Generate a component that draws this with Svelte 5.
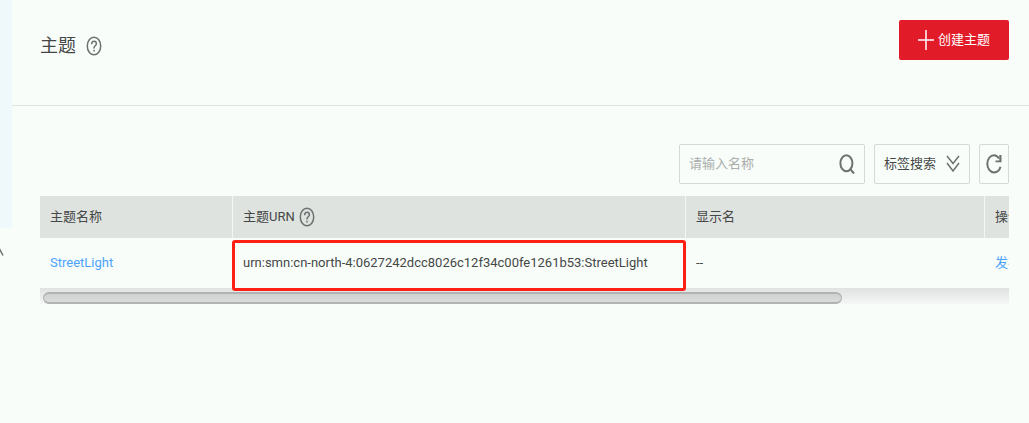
<script>
  let keyword = '';

  const topics = [
    {
      name: 'StreetLight',
      urn: 'urn:smn:cn-north-4:0627242dcc8026c12f34c00fe1261b53:StreetLight',
      display: '--'
    }
  ];
</script>

{#snippet helpIcon()}
  <svg class="help" viewBox="0 0 16 20" aria-hidden="true">
    <ellipse cx="8" cy="10" rx="6.7" ry="8.8" />
    <path d="M5.6 8.2C5.7 6.2 6.6 5.2 8 5.2s2.4 1 2.4 2.6c0 1.9-2.4 2.1-2.4 4.1v.6M8 13.8v1.7" />
  </svg>
{/snippet}

<div class="layout">
  <aside class="sidebar">
    <div class="panel"></div>
    <svg class="caret" viewBox="0 0 4 9" aria-hidden="true"><path d="M-2 7l1.5-6L3 7.5" /></svg>
  </aside>

  <main>
    <header>
      <h1>主题 {@render helpIcon()}</h1>
      <button class="create">
        <svg class="plus" viewBox="0 0 16 20" aria-hidden="true"><path d="M8 0v20M0 10h16" /></svg>
        创建主题
      </button>
    </header>

    <section class="content">
      <div class="toolbar">
        <div class="search">
          <input type="text" placeholder="请输入名称" aria-label="请输入名称" bind:value={keyword} />
          <svg class="magnifier" viewBox="0 0 16 20" aria-hidden="true">
            <ellipse cx="7.4" cy="9.2" rx="6" ry="8" />
            <path d="M11.5 15.5l3.5 4" />
          </svg>
        </div>
        <button class="tags">
          标签搜索
          <svg class="chevrons" viewBox="0 0 14 18" aria-hidden="true">
            <path d="M1 1l6 7.5L13 1M1 8l6 8 6-8" />
          </svg>
        </button>
        <button class="refresh" aria-label="刷新">
          <svg viewBox="0 0 16 20" aria-hidden="true">
            <path d="M13 4.600C11.800 2.600 10 1.300 8 1.300 4.300 1.300 1.300 5 1.300 9.800s3 8.600 6.700 8.600c3 0 5.600-2.300 6.500-5.600" />
            <path class="arrow" d="M15.500 1v7.200H9.500V6.400h3.800V1z" />
          </svg>
        </button>
      </div>

      <div class="scroller">
        <table>
          <colgroup>
            <col class="col-name" />
            <col class="col-urn" />
            <col class="col-display" />
            <col class="col-action" />
          </colgroup>
          <thead>
            <tr>
              <th>主题名称</th>
              <th><span class="with-icon">主题URN {@render helpIcon()}</span></th>
              <th>显示名</th>
              <th>操作</th>
            </tr>
          </thead>
          <tbody>
            {#each topics as topic}
              <tr>
                <td><a href="#topic">{topic.name}</a></td>
                <td class="marked">{topic.urn}</td>
                <td>{topic.display}</td>
                <td><a href="#publish">发布消息</a></td>
              </tr>
            {/each}
          </tbody>
        </table>
        <div class="track"><div class="thumb"></div></div>
      </div>
    </section>
  </main>
</div>

<style>
  :global(body) {
    margin: 0;
    background: #f8fdfa;
  }

  .layout {
    display: flex;
    color: #454746;
    font-family: Roboto, "Noto Sans CJK SC", sans-serif;
    font-size: 13px;
    line-height: 22px;
  }

  svg {
    display: block;
    flex: none;
    fill: none;
    stroke: #6e7170;
    stroke-width: 1.5;
  }

  button,
  input {
    box-sizing: border-box;
    font: inherit;
    color: inherit;
  }

  button {
    display: flex;
    align-items: center;
    cursor: pointer;
  }

  .sidebar {
    flex: none;
    width: 12px;
  }

  .panel {
    height: 228px;
    background: #eff8fa;
  }

  .caret {
    width: 4px;
    height: 9px;
    margin-top: 20px;
  }

  main {
    flex: 1;
    min-width: 0;
  }

  header {
    display: flex;
    align-items: flex-start;
    justify-content: space-between;
    box-sizing: border-box;
    height: 106px;
    padding: 20px 20px 0 28px;
    border-bottom: 1px solid #dfe3e1;
  }

  h1 {
    display: flex;
    align-items: center;
    gap: 10px;
    margin: 0;
    height: 52px;
    font-size: 18px;
    font-weight: 400;
  }

  .help {
    width: 16px;
    height: 20px;
  }

  .create {
    gap: 4px;
    height: 40px;
    padding: 0 19px;
    border: 0;
    border-radius: 2px;
    background: #e21b29;
    color: #fff;
  }

  .plus {
    width: 16px;
    height: 20px;
    stroke: #fff;
  }

  .content {
    padding: 38px 20px 0 28px;
  }

  .toolbar {
    display: flex;
    justify-content: flex-end;
    gap: 9px;
    margin-bottom: 12px;
  }

  .search,
  .tags,
  .refresh {
    box-sizing: border-box;
    height: 40px;
    border: 1px solid #d5d9d7;
    border-radius: 2px;
    background: #f8fdfa;
  }

  .search {
    display: flex;
    align-items: center;
    width: 186px;
    padding: 0 9px;
  }

  .search input {
    flex: 1;
    min-width: 0;
    padding: 0;
    border: 0;
    outline: 0;
    background: transparent;
  }

  .search input::placeholder {
    color: #aaadab;
    opacity: 1;
  }

  .magnifier {
    width: 16px;
    height: 20px;
    stroke-width: 2;
  }

  .tags {
    gap: 10px;
    padding: 0 9px;
  }

  .chevrons {
    width: 14px;
    height: 18px;
  }

  .refresh {
    justify-content: center;
    width: 30px;
    padding: 0;
  }

  .refresh svg {
    width: 16px;
    height: 20px;
    stroke-width: 2;
  }

  .refresh .arrow {
    fill: #6e7170;
    stroke: none;
  }

  .scroller {
    overflow: hidden;
  }

  table {
    width: 1170px;
    table-layout: fixed;
    border-collapse: separate;
    border-spacing: 0;
  }

  .col-name {
    width: 193px;
  }

  .col-urn {
    width: 453px;
  }

  .col-display {
    width: 299px;
  }

  th,
  td {
    box-sizing: border-box;
    padding: 0 10px;
    text-align: left;
    font-weight: 400;
    white-space: nowrap;
  }

  th {
    height: 42px;
    border-right: 1px solid #f3f6f4;
    background: #dfe3e0;
  }

  td {
    height: 50px;
  }

  .with-icon {
    display: flex;
    align-items: center;
    gap: 4px;
  }

  a {
    color: #4ba3fb;
    text-decoration: none;
  }

  .marked {
    position: relative;
  }

  .marked::after {
    content: '';
    position: absolute;
    z-index: 1;
    inset: 2px 0 -3px -1px;
    border: 3px solid #ff2015;
    border-radius: 3px;
    pointer-events: none;
  }

  .track {
    box-sizing: border-box;
    height: 16px;
    padding: 4px 3px 0;
    background: linear-gradient(#dfe2e0, #f5f6f5);
  }

  .thumb {
    box-sizing: border-box;
    width: 83%;
    height: 12px;
    border: 1px solid #b0b3b1;
    border-width: 2px 1px;
    border-radius: 6px;
    background: linear-gradient(#d0d2d1, #dadcda);
  }
</style>
